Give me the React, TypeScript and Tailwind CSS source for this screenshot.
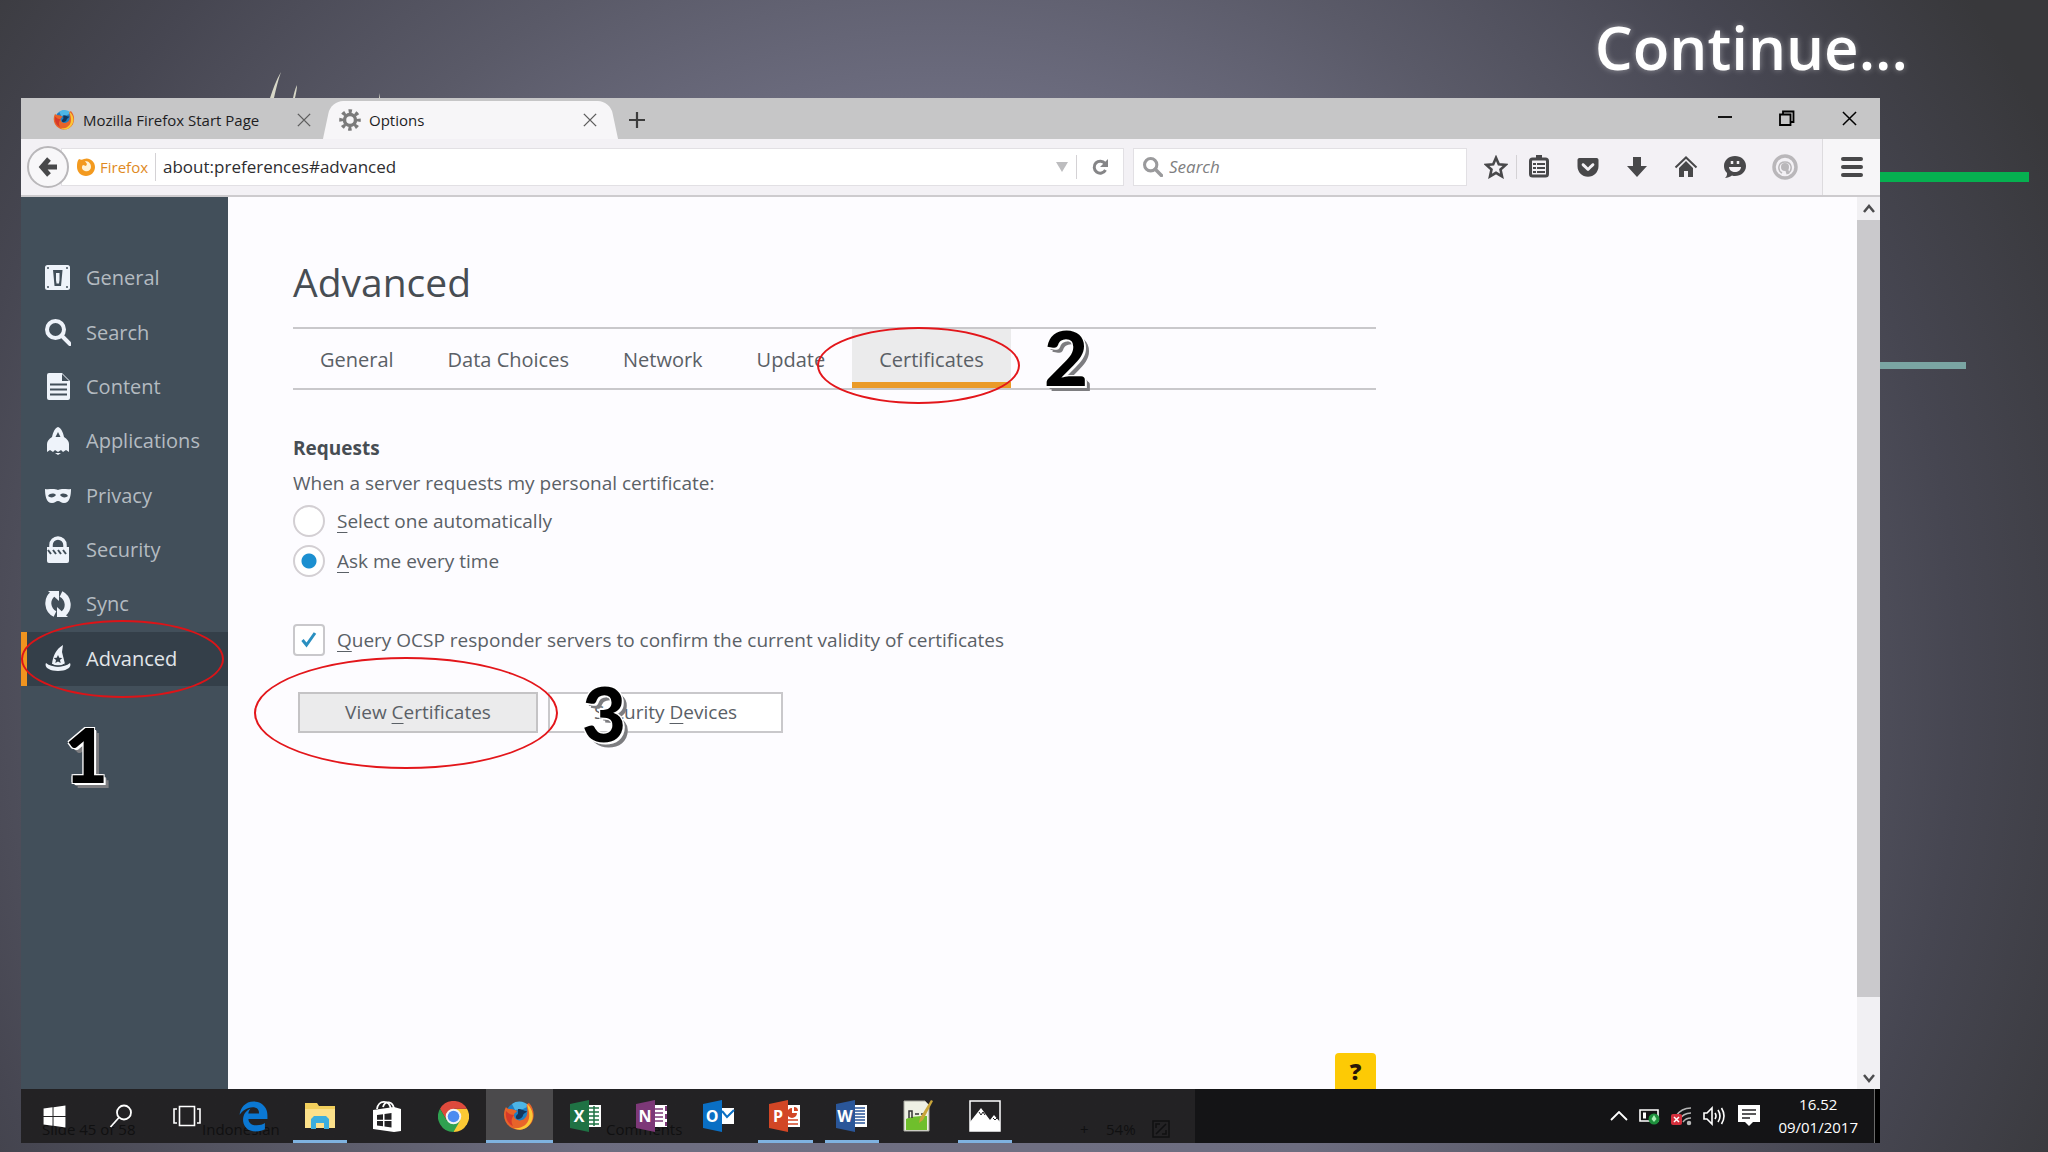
import { ReactNode } from 'react';
import { FaGetPocket, FaWindows } from 'react-icons/fa';
import { FaEdgeLegacy } from 'react-icons/fa6';

interface IconProps {
  className?: string;
}

const FirefoxIcon = ({ className }: IconProps) => (
  <svg className={className} viewBox="0 0 32 32">
    <circle cx="16" cy="15" r="13" fill="#1f7fc4" />
    <path d="M9 4c5-4 13-3 17 2l-6 3-8 1z" fill="#4db5e6" />
    <path d="M15 9c4 0 5 2 9 2-1 2-3 2-4 4 0 2-3 5-6 4-2-1-1-4 1-5z" fill="#12365f" />
    <path d="M3 7c1 2 3 2 5 2 2 0 4 1 6 2-1 2-3 2-3 4 0 5 6 7 10 4 3-2 4-6 3-11-1-3 0-4 2-5 5 5 6 13 3 19-4 7-13 10-20 6C1 24-1 14 3 7z" fill="#e8642a" />
    <path d="M24 4c6 5 8 14 3 20-4 6-11 7-16 4 7 1 14-3 15-10 1-5-1-9-2-14z" fill="#fbc736" />
    <path d="M3 11c-1 6 1 12 7 15-2-4-2-7 1-11-3 0-5-1-8-4z" fill="#d6392a" />
  </svg>
);

const FirefoxBadge = ({ className }: IconProps) => (
  <svg className={className} viewBox="0 0 20 20">
    <path d="M3 2c2 1 3 1 5 0 5-2 11 2 11 8 0 5-4 9-9 9s-9-4-9-9c0-3 0-6 2-8z" fill="#f39a1f" />
    <path d="M9 4c4 0 6 3 6 6s-3 5-6 4-4-4-2-6l3 1 1-2z" fill="#fff3d6" />
  </svg>
);

const GearIcon = ({ className }: IconProps) => (
  <svg className={className} viewBox="0 0 24 24" fill="none" stroke="#7b7b7b">
    <circle cx="12" cy="12" r="6" strokeWidth="3.8" />
    <circle cx="12" cy="12" r="9.5" strokeWidth="4.500" strokeDasharray="3.6 3.86" strokeDashoffset="1.8" />
  </svg>
);

const CrossIcon = ({ className }: IconProps) => (
  <svg className={className} viewBox="0 0 16 16" fill="none" stroke="currentColor" strokeWidth="1.6">
    <path d="M1 1l14 14M15 1L1 15" />
  </svg>
);

const MagnifierIcon = ({ className }: IconProps) => (
  <svg className={className} viewBox="0 0 26 26" fill="none" stroke="currentColor">
    <circle cx="10" cy="10" r="8" strokeWidth="4" />
    <path d="M16 16l8 8" strokeWidth="4.5" strokeLinecap="round" />
  </svg>
);

const sidebarItems: { label: string; icon: ReactNode }[] = [
  {
    label: 'General',
    icon: (
      <>
        <rect x="0" y="1" width="25" height="25" rx="2.5" fill="currentColor" />
        <path d="M8 6h9.500l-1.500 16h-6.500z" fill="#424f5a" />
        <path d="M11 9h3.500v7l-.5 3.500h-2.500l-.5-3.500z" fill="currentColor" />
        <g fill="#424f5a">
          <circle cx="3" cy="4" r="1" />
          <circle cx="22" cy="4" r="1" />
          <circle cx="3" cy="23" r="1" />
          <circle cx="22" cy="23" r="1" />
        </g>
      </>
    ),
  },
  {
    label: 'Search',
    icon: (
      <g fill="none" stroke="currentColor">
        <circle cx="10.500" cy="10.500" r="8.500" strokeWidth="4" />
        <path d="M17 17l8 8" strokeWidth="4" strokeLinecap="round" />
      </g>
    ),
  },
  {
    label: 'Content',
    icon: (
      <>
        <path d="M4 0h13l8 8v17a2 2 0 0 1-2 2H4a2 2 0 0 1-2-2V2a2 2 0 0 1 2-2z" fill="currentColor" />
        <path d="M17 1v7h7z" fill="#424f5a" />
        <path d="M5 11.500h17M5 16.500h17M5 21.500h17" stroke="#424f5a" strokeWidth="2" />
      </>
    ),
  },
  {
    label: 'Applications',
    icon: (
      <>
        <path d="M13 0c3 1 5 5 6 10 3 2 5 4 5 7v8l-3-2-3 2-2-2-3 2-3-2-2 2-3-2-3 2v-8c0-3 2-5 5-7 1-5 3-9 6-10z" fill="currentColor" />
        <path d="M13 5l2.500 5h-5z" fill="#424f5a" />
        <path d="M10 26h6l-3 2z" fill="currentColor" />
      </>
    ),
  },
  {
    label: 'Privacy',
    icon: (
      <>
        <path d="M0 7c4 1 8-1 13 1 5-2 9 0 13-1 0 6-1 14-7 14-3 0-4-2-6-2s-3 2-6 2C1 21 0 13 0 7z" fill="currentColor" />
        <path d="M3 14c2-3 6-3 8-1-2 3-6 3-8 1zM23 14c-2-3-6-3-8-1 2 3 6 3 8 1z" fill="#424f5a" />
      </>
    ),
  },
  {
    label: 'Security',
    icon: (
      <>
        <path d="M6 12V9a7 7 0 0 1 14 0v3" fill="none" stroke="currentColor" strokeWidth="3.500" />
        <path d="M2 11h22v14a2 2 0 0 1-2 2H4a2 2 0 0 1-2-2z" fill="currentColor" />
        <path d="M3 14l3 4M8 14l3 4M13 14l3 4M18 14l3 4" stroke="#424f5a" strokeWidth="2" />
      </>
    ),
  },
  {
    label: 'Sync',
    icon: (
      <>
        <path d="M10 24C2 20 1 9 8 4" fill="none" stroke="currentColor" strokeWidth="6" />
        <path d="M16 4c8 4 9 15 2 20" fill="none" stroke="currentColor" strokeWidth="6" />
        <path d="M3 1h11v10z" fill="currentColor" />
        <path d="M23 27H12V17z" fill="currentColor" />
      </>
    ),
  },
  {
    label: 'Advanced',
    icon: (
      <>
        <path d="M18 0l-1 7 3 12c-4 2-9 2-13 0C8 11 11 4 18 0z" fill="currentColor" />
        <path d="M13 10l1.300 2.800 3 .3-2.300 2 .7 3-2.700-1.600-2.700 1.600.7-3-2.300-2 3-.3z" fill="#343f49" />
        <path d="M1 18c6 5 18 5 24 0 2 4-3 8-12 8S-1 22 1 18z" fill="currentColor" />
        <path d="M5 18c5 4 11 4 16 0" fill="none" stroke="#343f49" />
      </>
    ),
  },
];

const preferenceTabs = ['General', 'Data Choices', 'Network', 'Update', 'Certificates'];

interface OfficeIconProps {
  letter: string;
  color: string;
  children?: ReactNode;
}

const OfficeIcon = ({ letter, color, children }: OfficeIconProps) => (
  <svg className="h-8 w-8" viewBox="0 0 32 32">
    <rect x="15" y="5" width="16" height="22" fill="#fff" />
    {children}
    <path d="M0 4l19-4v32L0 28z" fill={color} />
    <text x="9" y="22" textAnchor="middle" fontFamily="Open Sans, sans-serif" fontSize="16" fontWeight="700" fill="#fff">
      {letter}
    </text>
  </svg>
);

const taskbarItems: { name: string; open?: boolean; active?: boolean; icon: ReactNode }[] = [
  { name: 'Start', icon: <FaWindows className="h-[25px] w-[25px]" /> },
  {
    name: 'Find',
    icon: (
      <svg className="h-6 w-6" viewBox="0 0 24 24" fill="none" stroke="currentColor" strokeWidth="1.800">
        <circle cx="15" cy="8.500" r="7" />
        <path d="M10 13.500L1.500 23" />
      </svg>
    ),
  },
  {
    name: 'Task view',
    icon: (
      <svg className="h-6 w-7" viewBox="0 0 28 24" fill="none" stroke="currentColor" strokeWidth="1.600">
        <path d="M6.500 2.500h15v19h-15zM4 5H1v14h3M24 5h3v14h-3" />
      </svg>
    ),
  },
  { name: 'Edge', icon: <FaEdgeLegacy className="h-[31px] w-[31px] text-[#0b78d3]" /> },
  {
    name: 'File Explorer',
    open: true,
    icon: (
      <svg className="h-7 w-8" viewBox="0 0 32 28">
        <path d="M1 1h12l2 3h16v22H1z" fill="#f2cf5c" />
        <path d="M1 7h30v19H1z" fill="#fbe08a" />
        <path d="M7 27V17l3-3h12l3 3v10h-5v-6h-8v6z" fill="#3aaede" />
      </svg>
    ),
  },
  {
    name: 'Store',
    icon: (
      <svg className="h-8 w-[30px]" viewBox="0 0 30 32">
        <path d="M5 9c1-9 12-10 14 0M11 7c2-7 10-6 11 2" fill="none" stroke="#fff" strokeWidth="1.800" />
        <path d="M1 10l21-3 7 2v22l-7 1-21-3z" fill="#fff" />
        <path d="M5 15l6-.8v5.500H5zM12.500 14l7-1v6.700h-7zM5 21h6v5.300l-6-.8zM12.500 21h7v6.500l-7-1z" fill="#232224" />
      </svg>
    ),
  },
  {
    name: 'Chrome',
    icon: (
      <svg className="h-[31px] w-[31px]" viewBox="0 0 32 32">
        <path d="M16 8h13.900A16 16 0 0 1 16 32z" fill="#fcc934" />
        <path d="M2.100 8A16 16 0 0 1 29.900 8H16l-7 12z" fill="#de4a3c" />
        <path d="M2.100 8l7 12 13.800 0L16 32A16 16 0 0 1 2.100 8z" fill="#2fa150" />
        <circle cx="16" cy="16" r="8" fill="#f3f3f3" />
        <circle cx="16" cy="16" r="6" fill="#4b8bf0" />
      </svg>
    ),
  },
  { name: 'Firefox', open: true, active: true, icon: <FirefoxIcon className="h-8 w-8" /> },
  {
    name: 'Excel',
    icon: (
      <OfficeIcon letter="X" color="#1f7244">
        <path d="M19 8h10M19 12h10M19 16h10M19 20h10M19 24h10M24 6v20" stroke="#1f7244" strokeWidth="1.500" />
      </OfficeIcon>
    ),
  },
  {
    name: 'OneNote',
    icon: (
      <OfficeIcon letter="N" color="#7d3878">
        <path d="M19 9h8M19 13h8M19 17h8M19 21h8" stroke="#7d3878" strokeWidth="1.500" />
        <path d="M30 6v5M30 14v5M30 22v4" stroke="#7d3878" strokeWidth="2" />
      </OfficeIcon>
    ),
  },
  {
    name: 'Outlook',
    icon: (
      <OfficeIcon letter="O" color="#0a6fc4">
        <path d="M15 4h17v4H15zM15 24h17v4H15z" fill="#232224" />
        <path d="M19 11l5 6 7-7" fill="none" stroke="#0a6fc4" strokeWidth="2" />
      </OfficeIcon>
    ),
  },
  {
    name: 'PowerPoint',
    open: true,
    icon: (
      <OfficeIcon letter="P" color="#d24625">
        <path d="M19 20h10M19 24h10" stroke="#d24625" strokeWidth="1.600" />
        <path d="M23 8a5 5 0 1 0 5 5h-5z" fill="#d24625" />
        <path d="M25 7a4 4 0 0 1 4 4h-4z" fill="#d24625" />
      </OfficeIcon>
    ),
  },
  {
    name: 'Word',
    open: true,
    icon: (
      <OfficeIcon letter="W" color="#2a5699">
        <path d="M19 8h10M19 11h10M19 14h10M19 17h10M19 20h10M19 23h10" stroke="#2a5699" strokeWidth="1.300" />
      </OfficeIcon>
    ),
  },
  {
    name: 'Notepad++',
    icon: (
      <svg className="h-[34px] w-8" viewBox="0 0 32 34">
        <path d="M2 2h21l4 4v26H2z" fill="#eef0e4" stroke="#a8a8a0" />
        <path d="M4 20c6-3 14-3 21-3v14H4z" fill="#6fbf2c" />
        <path d="M7 19v-7h3v7M13 15h4M19 15h4" fill="none" stroke="#333" strokeWidth="1.500" />
        <path d="M29 1l2 1-10 19-4 3 1-5z" fill="#c9a53a" />
      </svg>
    ),
  },
  {
    name: 'Photos',
    open: true,
    icon: (
      <svg className="h-8 w-8" viewBox="0 0 32 32">
        <path d="M1 1h30v30H1z" fill="none" stroke="#fff" strokeWidth="1.500" />
        <path d="M1 22L12 8l9 12 4-5 6 7v9H1z" fill="#fff" />
        <path d="M10 12l2 3 2-3 2 3M24 18l2 2 2-2" fill="none" stroke="#232224" />
      </svg>
    ),
  },
];

const toolbarButtons: { name: string; icon: ReactNode }[] = [
  {
    name: 'Bookmarks',
    icon: (
      <>
        <path d="M9 0h6v3H9z" fill="currentColor" />
        <rect x="3.500" y="4" width="17" height="17" rx="2" fill="none" stroke="currentColor" strokeWidth="3" />
        <path d="M6 9h3M10 9h8M6 13h3M10 13h8M6 17h3M10 17h8" stroke="currentColor" strokeWidth="2" />
      </>
    ),
  },
  { name: 'Pocket', icon: <FaGetPocket size="24" /> },
  { name: 'Downloads', icon: <path d="M8 2h8v9h6L12 22 2 11h6z" fill="currentColor" /> },
  {
    name: 'Home',
    icon: (
      <>
        <path d="M1.500 12.500L12 2.500l10.500 10" fill="none" stroke="currentColor" strokeWidth="2" />
        <path d="M5 13l7-7 7 7v9h-5v-6h-4v6H5z" fill="currentColor" />
      </>
    ),
  },
  {
    name: 'Chat',
    icon: (
      <>
        <path d="M12 1c6 0 11 4 11 10s-5 10-11 10c-1 0-2 0-3-.500C7 22 4 23 2 23c2-2 2-3 2-5-2-2-3-4-3-7C1 5 6 1 12 1z" fill="currentColor" />
        <path d="M6 12h12c0 3-3 5-6 5s-6-2-6-5z" fill="#f3f1f5" />
        <path d="M9 6v3M15 6v3" stroke="#f3f1f5" strokeWidth="2.500" />
      </>
    ),
  },
];

const TabStrip = () => (
  <div className="flex h-[41px] items-end bg-[#c6c6c7]">
    <div className="flex h-[38px] w-[302px] items-center pr-3 pl-8">
      <FirefoxIcon className="mr-2 h-[22px] w-[22px]" />
      <span className="flex-1 text-[15px] whitespace-nowrap text-[#1d1d1f]">Mozilla Firefox Start Page</span>
      <button aria-label="Close tab" className="text-[#5e5e5e]">
        <CrossIcon className="h-[14px] w-[14px]" />
      </button>
    </div>
    <div className="relative isolate flex h-[38px] w-[295px] items-center pr-[21px] pl-4 before:absolute before:inset-y-0 before:left-1 before:-z-10 before:w-3/4 before:-skew-x-12 before:rounded-tl-xl before:bg-[#f7f6f8] after:absolute after:inset-y-0 after:right-1 after:-z-10 after:w-3/4 after:skew-x-12 after:rounded-tr-xl after:bg-[#f7f6f8]">
      <GearIcon className="mr-2 h-[22px] w-[22px]" />
      <span className="flex-1 text-[15px] text-[#1d1d1f]">Options</span>
      <button aria-label="Close tab" className="text-[#5e5e5e]">
        <CrossIcon className="h-[14px] w-[14px]" />
      </button>
    </div>
    <button aria-label="New tab" className="flex h-[38px] w-[38px] items-center justify-center text-[#3c3c3c]">
      <svg className="h-[18px] w-[18px]" viewBox="0 0 18 18" stroke="currentColor" strokeWidth="2.200">
        <path d="M9 1v16M1 9h16" />
      </svg>
    </button>
    <div className="ml-auto flex h-[38px] pb-1 text-black">
      <button aria-label="Minimize" className="flex w-[62px] items-center justify-center">
        <svg className="h-4 w-4" viewBox="0 0 16 16" stroke="currentColor" strokeWidth="1.800">
          <path d="M1 7h14" />
        </svg>
      </button>
      <button aria-label="Restore" className="flex w-[62px] items-center justify-center">
        <svg className="h-4 w-4" viewBox="0 0 16 16" fill="none" stroke="currentColor" strokeWidth="1.800">
          <path d="M1 4.500h10.500V15H1zM4 4V1.500h10.500V12H12" />
        </svg>
      </button>
      <button aria-label="Close" className="flex w-[62px] items-center justify-center">
        <CrossIcon className="h-[15px] w-[15px]" />
      </button>
    </div>
  </div>
);

const NavigationBar = () => (
  <div className="flex h-[58px] items-center border-b-2 border-[#cdcbce] bg-[#f3f1f5] pl-[6px] text-[#48484a]">
    <button aria-label="Back" className="z-10 flex h-[42px] w-[42px] items-center justify-center rounded-full border-2 border-[#b9b7ba] bg-[#f8f7f9]">
      <svg className="h-5 w-5" viewBox="0 0 20 20" fill="none" stroke="currentColor" strokeWidth="5">
        <path d="M11 2l-7 8 7 8M4 10h15" />
      </svg>
    </button>
    <div className="-ml-2 flex h-[38px] flex-1 items-center border border-[#e2e0e4] bg-white pl-[14px]">
      <FirefoxBadge className="h-5 w-5" />
      <span className="ml-1 text-[15px] text-[#e08a1e]">Firefox</span>
      <span className="mx-[7px] h-7 w-px bg-[#d4d2d5]" />
      <input aria-label="Address" className="min-w-0 flex-1 text-[17px] text-[#2d2d30] outline-none" defaultValue="about:preferences#advanced" />
      <svg className="h-[10px] w-3" viewBox="0 0 12 10">
        <path d="M0 0h12L6 10z" fill="#bdbdbf" />
      </svg>
      <span className="ml-2 h-6 w-px bg-[#d4d2d5]" />
      <button aria-label="Reload" className="mx-[14px] text-[#858587]">
        <svg className="h-[18px] w-[18px]" viewBox="0 0 18 18" fill="none" stroke="currentColor" strokeWidth="3">
          <path d="M14 5.500A6 6 0 1 0 14.500 12" />
          <path d="M17 1v8H9z" fill="currentColor" stroke="none" />
        </svg>
      </button>
    </div>
    <label className="ml-[9px] flex h-[38px] w-[334px] items-center border border-[#e2e0e4] bg-white pl-[9px]">
      <MagnifierIcon className="h-5 w-5 text-[#9a9a9c]" />
      <input aria-label="Search" className="ml-[6px] min-w-0 flex-1 text-[17px] italic outline-none placeholder:text-[#7e7e80]" placeholder="Search" />
    </label>
    <button aria-label="Bookmark this page" className="ml-[17px]">
      <svg className="h-6 w-6" viewBox="0 0 24 24" fill="none" stroke="currentColor" strokeWidth="2.600">
        <path d="M12 2.800l2.800 6.400 6.900.7-5.200 4.600 1.500 6.900-6-3.600-6 3.600 1.500-6.900-5.200-4.600 6.900-.7z" />
      </svg>
    </button>
    <span className="ml-2 h-6 w-px bg-[#d4d2d5]" />
    <div className="ml-[10px] flex gap-[25px]">
      {toolbarButtons.map((button) => (
        <button key={button.name} aria-label={button.name}>
          <svg className="h-6 w-6" viewBox="0 0 24 24">
            {button.icon}
          </svg>
        </button>
      ))}
      <button aria-label="Account" className="text-[#b9b7ba]">
        <svg className="h-[26px] w-[26px]" viewBox="0 0 26 26" fill="none" stroke="currentColor">
          <circle cx="13" cy="13" r="11" strokeWidth="3.500" />
          <path d="M10 19c-5-3-4-11 3-11s8 8 3 11" strokeWidth="1.500" />
          <circle cx="13" cy="13" r="4" fill="currentColor" stroke="none" />
          <path d="M14 13l2 7" strokeWidth="3" />
        </svg>
      </button>
    </div>
    <div className="ml-6 flex h-full w-[58px] items-center justify-center border-l border-[#dddbde] bg-[#f7f6f8]">
      <button aria-label="Menu" className="flex w-[22px] flex-col gap-1">
        <span className="h-1 rounded-sm bg-[#48484a]" />
        <span className="h-1 rounded-sm bg-[#48484a]" />
        <span className="h-1 rounded-sm bg-[#48484a]" />
      </button>
    </div>
  </div>
);

// Numbered step marker: black digit with a white rim and a grey shadow
const Step = ({ value, className }: { value: string; className: string }) => (
  <span
    className={`pointer-events-none absolute z-20 font-[Lato,sans-serif] text-[76px] leading-none font-black text-black [text-shadow:-1px_-1px_0_#fff,1px_-1px_0_#fff,-1px_1px_0_#fff,2px_2px_0_#fff,3px_3px_0_#7d7d80,5px_5px_0_#7d7d80] ${className}`}
  >
    {value}
  </span>
);

const Sidebar = () => (
  <nav className="relative w-[207px] shrink-0 bg-[#424f5a] pt-[54px]">
    <ul className="grid h-[435px] auto-rows-fr">
      {sidebarItems.map(({ label, icon }) => {
        const selected = label === 'Advanced';
        return (
          <li key={label} className="relative">
            <a
              href={`#${label.toLowerCase()}`}
              className={`flex h-full items-center border-l-[6px] pl-[18px] text-[20px] ${
                selected ? 'border-[#f0941f] bg-[#343f49] text-[#e2e6e9]' : 'border-transparent text-[#b4bbc1]'
              }`}
            >
              <svg className="mr-[15px] h-7 w-[26px] text-[#eef3fa]" viewBox="0 0 26 28">
                {icon}
              </svg>
              {label}
            </a>
            {selected && (
              <span className="pointer-events-none absolute -top-3 left-0 h-[78px] w-[203px] rounded-[50%] border-2 border-[#dc1418]" />
            )}
          </li>
        );
      })}
    </ul>
    <Step value="1" className="top-[519px] left-[43px]" />
  </nav>
);

const Preferences = () => (
  <section className="flex flex-1 flex-col bg-[#fdfcff] pl-[65px] text-[19px] text-[#5a6066]">
    <div className="relative flex w-full max-w-[1083px] flex-1 flex-col">
      <h1 className="mt-[57px] text-[39px] leading-[56px] text-[#474d53]">Advanced</h1>
      <div className="relative mt-[17px] flex h-[63px] border-y-2 border-[#c9c8cb] text-[20px]">
        {preferenceTabs.map((tab) => (
          <button
            key={tab}
            className={`px-[27px] ${tab === 'Certificates' ? 'border-b-[6px] border-[#ea9a28] bg-[#ebebec] pt-2' : 'pt-[2px]'}`}
          >
            {tab}
          </button>
        ))}
        <span className="pointer-events-none absolute -top-[2px] left-[524px] h-[77px] w-[203px] rounded-[50%] border-2 border-[#e3161b]" />
        <Step value="2" className="-top-[10px] left-[751px]" />
      </div>

      <h2 className="mt-[44px] leading-[28px] font-bold text-[#474d53]">Requests</h2>
      <p className="mt-[7px] leading-[28px]">When a server requests my personal certificate:</p>
      <label className="mt-2 flex h-8 items-center gap-3">
        <input type="radio" name="request" className="h-8 w-8 appearance-none rounded-full border-2 border-[#d3cfd3] bg-white" />
        <span>
          <u className="underline-offset-4">S</u>elect one automatically
        </span>
      </label>
      <label className="mt-2 flex h-8 items-center gap-3">
        <input
          type="radio"
          name="request"
          defaultChecked
          className="h-8 w-8 appearance-none rounded-full border-2 border-[#d3cfd3] bg-white checked:bg-[radial-gradient(circle,#1b8fd0_7px,transparent_8px)]"
        />
        <span>
          <u className="underline-offset-4">A</u>sk me every time
        </span>
      </label>
      <label className="mt-[47px] flex h-8 items-center gap-3">
        <span className="grid h-8 w-8 place-items-center">
          <input type="checkbox" defaultChecked className="col-start-1 row-start-1 h-8 w-8 appearance-none rounded-sm border-2 border-[#c9c8cb] bg-white" />
          <svg className="pointer-events-none col-start-1 row-start-1 h-4 w-4" viewBox="0 0 16 16" fill="none" stroke="#2a8fc0" strokeWidth="3">
            <path d="M1.500 8l4 5L14 1" />
          </svg>
        </span>
        <span>
          <u className="underline-offset-4">Q</u>uery OCSP responder servers to confirm the current validity of certificates
        </span>
      </label>
      <div className="relative mt-9 ml-[5px] flex gap-[10px]">
        <button className="h-[41px] w-[240px] border-2 border-[#c4c3c5] bg-[#ebebec]">
          View <u className="underline-offset-4">C</u>ertificates
        </button>
        <button className="h-[41px] w-[235px] border-2 border-[#c9c8cb] bg-white">
          Security <u className="underline-offset-4">D</u>evices
        </button>
        <span className="pointer-events-none absolute -top-[35px] -left-[44px] h-[112px] w-[304px] rounded-[50%] border-2 border-[#e3161b]" />
        <Step value="3" className="-top-[17px] left-[284px]" />
      </div>
      <button aria-label="Help" className="mt-auto ml-auto h-9 w-[41px] rounded-t bg-[#fdca05] text-[23px] leading-9 font-extrabold text-[#2a1608]">
        ?
      </button>
    </div>
  </section>
);

const Scrollbar = () => (
  <div className="flex w-[23px] flex-col bg-[#f1f0f3] text-[#4c4c4e]">
    <div className="flex h-[23px] items-center justify-center">
      <svg className="h-[10px] w-3" viewBox="0 0 12 10" fill="none" stroke="currentColor" strokeWidth="2.500">
        <path d="M1 8l5-6 5 6" />
      </svg>
    </div>
    <div className="mb-[69px] flex-1 bg-[#cac9cc]" />
    <div className="flex h-[23px] items-center justify-center">
      <svg className="h-[10px] w-3" viewBox="0 0 12 10" fill="none" stroke="currentColor" strokeWidth="2.500">
        <path d="M1 2l5 6 5-6" />
      </svg>
    </div>
  </div>
);

const Taskbar = () => (
  <footer className="relative isolate flex h-[54px] bg-linear-to-r from-[#232224] from-[1174px] to-[#141416] to-[1174px] text-white">
    {/* Presenter status bar showing faintly through the taskbar */}
    <div className="pointer-events-none absolute inset-x-0 bottom-0 -z-10 flex h-7 items-center text-[15px] text-[#101011]">
      <span className="ml-[21px] w-[160px]">Slide 45 of 58</span>
      <span className="w-[404px]">Indonesian</span>
      <span className="w-[474px]">Comments</span>
      <span className="w-[26px]">+</span>
      <span>54%</span>
      <svg className="ml-4 h-[18px] w-[18px]" viewBox="0 0 18 18" fill="none" stroke="currentColor" strokeWidth="1.500">
        <path d="M1 1h16v16H1zM4 8V4h4M14 10v4h-4M4 14L14 4" />
      </svg>
    </div>
    <div className="grid w-[997px] grid-cols-15">
      {taskbarItems.map((item) => (
        <button
          key={item.name}
          aria-label={item.name}
          className={`relative flex items-center justify-center ${item.active ? 'bg-[#4b4a4c]' : ''}`}
        >
          {item.icon}
          {item.open && (
            <span className={`absolute bottom-0 h-[3px] bg-[#7fb2e0] ${item.active ? 'inset-x-0' : 'inset-x-[6px]'}`} />
          )}
        </button>
      ))}
    </div>
    <div className="ml-auto flex items-center border-r border-[#6a6a6a] pr-4">
      <div className="flex items-center gap-[11px]">
        <svg className="h-[10px] w-[18px]" viewBox="0 0 18 10" fill="none" stroke="currentColor" strokeWidth="1.800">
          <path d="M1 9l8-8 8 8" />
        </svg>
        <svg className="h-5 w-[21px]" viewBox="0 0 21 20">
          <path d="M1 4h18v11H1z" fill="none" stroke="#fff" strokeWidth="1.600" />
          <path d="M4 6.500h3v6H4z" fill="#fff" />
          <circle cx="15" cy="13" r="5.500" fill="#1d8f3c" />
          <path d="M15 9l2.500 4L15 16l-2.500-3z" fill="#a9efb5" />
        </svg>
        <svg className="h-5 w-[21px]" viewBox="0 0 21 20" fill="none" stroke="#b5b5b5" strokeWidth="1.500">
          <path d="M5 10C9 4 14 2 20 2M8 14c3-5 7-7 12-7M12 16c2-3 5-4 8-4" />
          <circle cx="18" cy="17" r="1.500" fill="#b5b5b5" />
          <rect x="0" y="8" width="11" height="11" rx="2" fill="#d42f3c" stroke="none" />
          <path d="M3 11l5 5M8 11l-5 5" stroke="#fff" />
        </svg>
        <svg className="h-5 w-[23px]" viewBox="0 0 23 20" fill="none" stroke="currentColor" strokeWidth="1.600">
          <path d="M1 7h3l5-5v16l-5-5H1zM12 7q2 3 0 6M15 4q4 6 0 12M18.500 2q5 8 0 16" />
        </svg>
        <svg className="h-6 w-6" viewBox="0 0 24 24">
          <path d="M1 1h22v17h-7l-4 4-4-4H1z" fill="#fff" />
          <path d="M5 6h14M5 10h14M5 14h8" stroke="#232224" strokeWidth="1.600" />
        </svg>
      </div>
      <div className="ml-[17px] text-center text-[15px] leading-[23px]">
        <div>16.52</div>
        <div>09/01/2017</div>
      </div>
    </div>
    <div className="w-[5px] bg-black" />
  </footer>
);

export default function App() {
  return (
    <main className="flex min-h-screen flex-col bg-[radial-gradient(circle_at_46%_60%,#77778b_0px,#6d6d80_580px,#5a5a68_780px,#464651_1020px,#38383b_1240px)] pb-[9px] font-['Open_Sans','Noto_Sans',sans-serif]">
      <header className="relative flex h-[98px] items-center justify-end pr-[140px]">
        <svg className="absolute bottom-0 left-[270px] h-[26px] w-[112px]" viewBox="0 0 112 26" fill="#d8d8c8">
          <path d="M11 0C6 8 3 17 0 26h4C6 17 8 8 11 0zM27 13c-2 4-3 8-4 13h2c1-5 2-9 2-13zM110 21l-1 5h1z" />
        </svg>
        <h1 className="-mt-1 text-[60px] leading-none font-semibold text-white [text-shadow:0_0_6px_#ffffff66]">Continue...</h1>
      </header>
      <div className="flex flex-1 pl-[21px]">
        <div className="flex min-w-0 flex-1 flex-col">
          <TabStrip />
          <NavigationBar />
          <div className="flex flex-1">
            <Sidebar />
            <Preferences />
            <Scrollbar />
          </div>
          <Taskbar />
        </div>
        <div className="w-[168px] pt-[74px]">
          <div className="h-[10px] w-[149px] bg-[#06b050]" />
          <div className="mt-[180px] h-[7px] w-[86px] bg-[#7aa5a3]" />
        </div>
      </div>
    </main>
  );
}
